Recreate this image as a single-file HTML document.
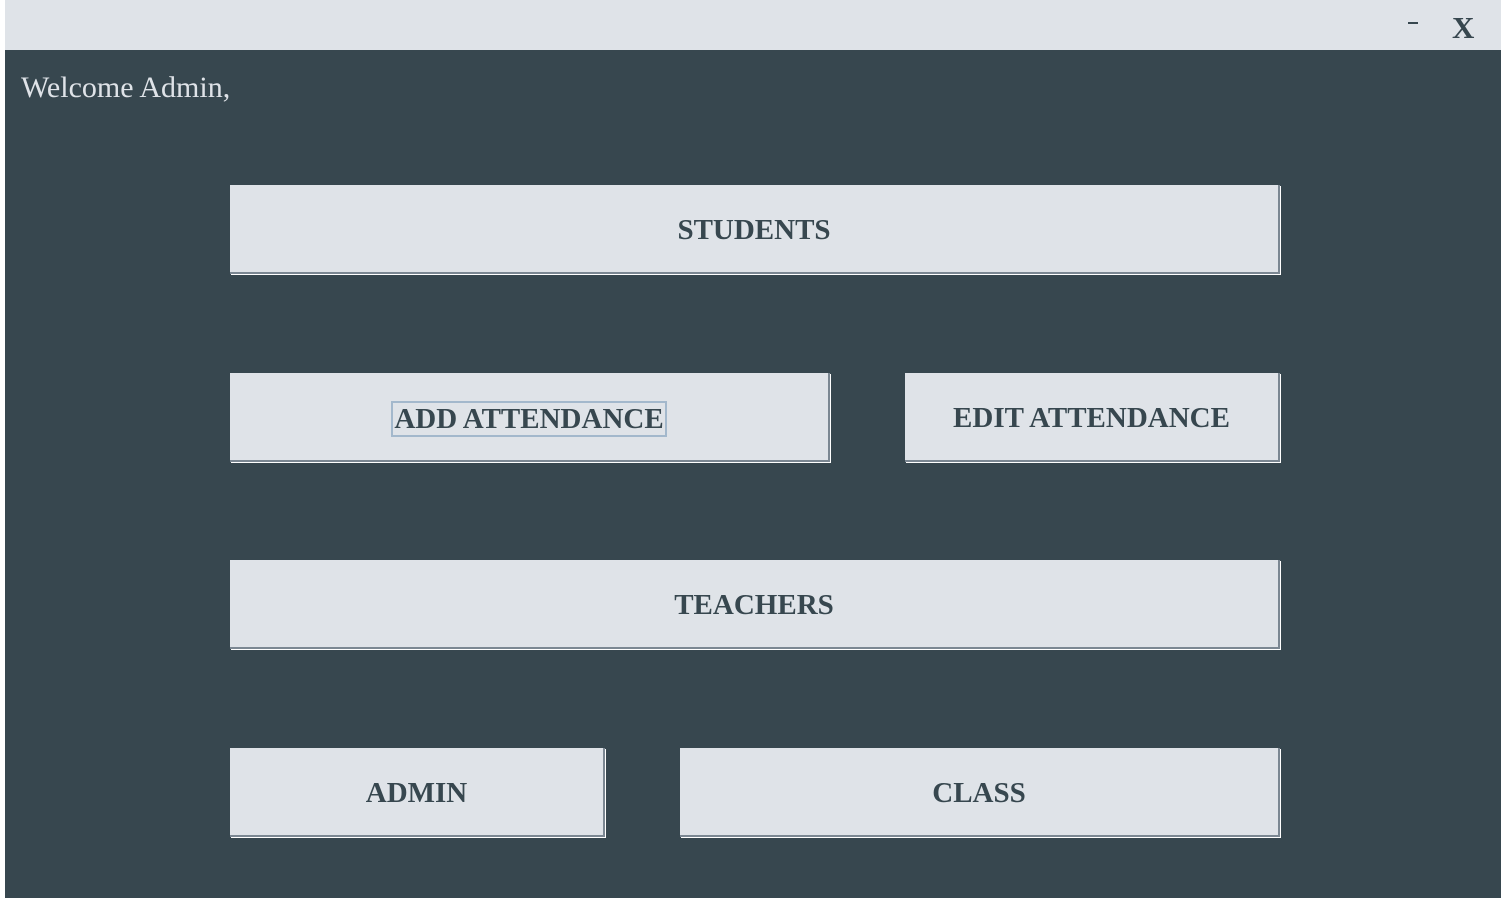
<!DOCTYPE html>
<html><head><style>
body{margin:0;width:1501px;height:898px;overflow:hidden;background:#37474f;position:relative;font-family:"Liberation Serif",serif}
.left{position:absolute;left:0;top:0;width:5px;height:898px;background:#fff}
.top{position:absolute;left:5px;top:0;width:1496px;height:50px;background:#dfe3e8}
.main{position:absolute;left:5px;top:50px;width:1496px;height:848px;background:#37474f}
.t{position:absolute;color:#37474f;font-weight:bold}
.w{position:absolute;left:21px;top:71px;font-size:30px;color:#dfe3e8;line-height:34px}
.b{position:absolute;background:#dfe3e8;box-sizing:border-box;border-right:2px solid #7b8792;border-bottom:2px solid #7b8792;box-shadow:1px 1px 0 #fff;display:flex;align-items:center;justify-content:center;font-weight:bold;font-size:29px;color:#37474f;padding-top:4px}
.f{border:2px solid #a3b8cc;padding:0 1px;line-height:32px}
</style></head><body>
<div class="left"></div>
<div class="top"></div>
<div class="main"></div>
<div style="position:absolute;left:1408px;top:22px;width:10px;height:2px;background:#37474f"></div>
<div class="t" style="left:1452px;top:10px;font-size:31px">X</div>
<div class="w">Welcome Admin,</div>
<div class="b" style="left:230px;top:185px;width:1050px;height:89px">STUDENTS</div>
<div class="b" style="left:230px;top:373px;width:600px;height:89px"><span class="f">ADD ATTENDANCE</span></div>
<div class="b" style="left:905px;top:373px;width:375px;height:89px">EDIT ATTENDANCE</div>
<div class="b" style="left:230px;top:560px;width:1050px;height:89px">TEACHERS</div>
<div class="b" style="left:230px;top:748px;width:375px;height:89px">ADMIN</div>
<div class="b" style="left:680px;top:748px;width:600px;height:89px">CLASS</div>
</body></html>
